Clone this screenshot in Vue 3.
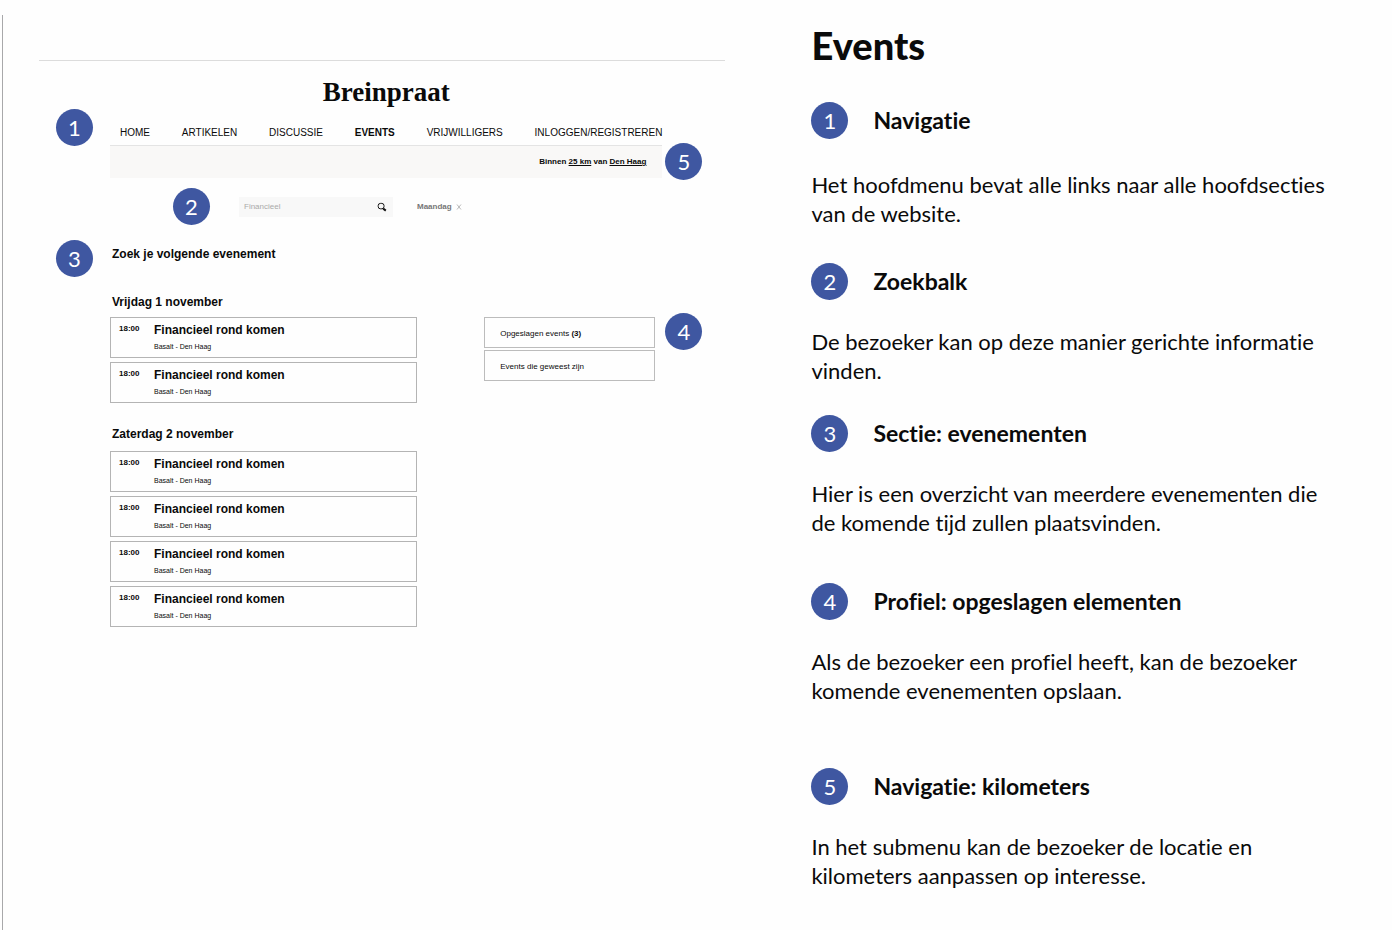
<script setup>
import { ref } from 'vue'

const query = ref('Financieel')

const menu = [
  { label: 'HOME' },
  { label: 'ARTIKELEN' },
  { label: 'DISCUSSIE' },
  { label: 'EVENTS', active: true },
  { label: 'VRIJWILLIGERS' },
  { label: 'INLOGGEN/REGISTREREN' }
]

const makeEvents = (count) =>
  Array.from({ length: count }, () => ({
    time: '18:00',
    title: 'Financieel rond komen',
    place: 'Basalt - Den Haag'
  }))

const days = [
  { name: 'Vrijdag 1 november', events: makeEvents(2) },
  { name: 'Zaterdag 2 november', events: makeEvents(4) }
]

const notes = [
  {
    title: 'Navigatie',
    text: 'Het hoofdmenu bevat alle links naar alle hoofdsecties\nvan de website.'
  },
  {
    title: 'Zoekbalk',
    text: 'De bezoeker kan op deze manier gerichte informatie\nvinden.'
  },
  {
    title: 'Sectie: evenementen',
    text: 'Hier is een overzicht van meerdere evenementen die\nde komende tijd zullen plaatsvinden.'
  },
  {
    title: 'Profiel: opgeslagen elementen',
    text: 'Als de bezoeker een profiel heeft, kan de bezoeker\nkomende evenementen opslaan.'
  },
  {
    title: 'Navigatie: kilometers',
    text: 'In het submenu kan de bezoeker de locatie en\nkilometers aanpassen op interesse.'
  }
]
</script>

<template>
  <main class="sheet">
    <section class="mock">
      <div class="site">
        <header>
          <p class="brand">Breinpraat</p>
          <div class="anchor">
            <span class="badge badge-left">1</span>
            <nav class="menu">
              <a
                v-for="item in menu"
                :key="item.label"
                href="#"
                :class="{ active: item.active }"
              >{{ item.label }}</a>
            </nav>
          </div>
          <div class="submenu anchor">
            <p>Binnen <a href="#">25 km</a> van <a href="#">Den Haag</a></p>
            <span class="badge badge-right">5</span>
          </div>
        </header>

        <form class="filters" @submit.prevent>
          <span class="badge">2</span>
          <div class="search">
            <input v-model="query" type="text" aria-label="Zoeken" />
            <button type="submit" aria-label="Zoek">
              <svg viewBox="0 0 10 10" width="10" height="10">
                <rect x="1.2" y="1.4" width="5.8" height="5.4" rx="2.2" fill="none" stroke="#111" stroke-width="1" />
                <path d="M6.2 6.6 L8.8 8.6" stroke="#111" stroke-width="2" />
              </svg>
            </button>
          </div>
          <div class="chip">
            <span>Maandag</span>
            <button type="button" aria-label="Verwijder Maandag">
              <svg viewBox="0 0 6 6" width="6" height="6">
                <path d="M1 0.5 L5 5.5 M5 0.5 L1 5.5" stroke="#aaa" stroke-width="0.8" />
              </svg>
            </button>
          </div>
        </form>

        <div class="anchor intro">
          <span class="badge badge-left">3</span>
          <h2>Zoek je volgende evenement</h2>
        </div>

        <div class="columns">
          <div class="agenda">
            <section v-for="day in days" :key="day.name" class="day">
              <h3>{{ day.name }}</h3>
              <ul>
                <li v-for="(event, i) in day.events" :key="i" class="event">
                  <time>{{ event.time }}</time>
                  <div>
                    <h4>{{ event.title }}</h4>
                    <p>{{ event.place }}</p>
                  </div>
                </li>
              </ul>
            </section>
          </div>
          <aside class="saved">
            <a href="#">Opgeslagen events <b>(3)</b></a>
            <a href="#">Events die geweest zijn</a>
            <span class="badge badge-saved">4</span>
          </aside>
        </div>
      </div>
    </section>

    <section class="legend">
      <h1>Events</h1>
      <ol>
        <li v-for="(note, i) in notes" :key="note.title">
          <div class="note-head">
            <span class="badge">{{ i + 1 }}</span>
            <h2>{{ note.title }}</h2>
          </div>
          <p>{{ note.text }}</p>
        </li>
      </ol>
    </section>
  </main>
</template>

<style>
body {
  background: #fefefe;
}
</style>

<style scoped>
.sheet {
  display: grid;
  grid-template-columns: minmax(0, 809fr) minmax(0, 581fr);
  box-sizing: border-box;
  min-height: calc(100vh - 15px);
  margin: 15px 0 0 2px;
  border-left: 1px solid #a8a8aa;
  color: #0a0a0a;
  font-family: "Liberation Sans", Arial, sans-serif;
}

h1, h2, h3, h4, p, ul, ol {
  margin: 0;
  padding: 0;
}

li {
  list-style: none;
}

a {
  color: inherit;
  text-decoration: none;
}

.mock {
  margin: 45px 86px 0 36px;
  border-top: 1px solid #dcdcdc;
}

.site {
  margin: 0 63px 0 71px;
}

.anchor {
  position: relative;
}

.badge {
  display: flex;
  flex: none;
  align-items: center;
  justify-content: center;
  width: 37px;
  height: 37px;
  border-radius: 50%;
  background: #3f57a1;
  color: #fff;
  font: 22px/37px Lato, sans-serif;
}

.badge-left,
.badge-right,
.badge-saved {
  position: absolute;
}

.badge-left {
  top: 1px;
  left: -54px;
}

.badge-right {
  top: -3px;
  right: -40px;
}

.badge-saved {
  top: -4px;
  right: -47px;
}

.brand {
  padding-top: 15px;
  font: bold 27px/32px "Liberation Serif", "Times New Roman", serif;
  text-align: center;
}

.menu {
  display: flex;
  justify-content: space-between;
  padding: 18px 0 5px 10px;
  border-bottom: 1px solid #e4e4e4;
  font-size: 10px;
  line-height: 14px;
}

.menu .active {
  font-weight: bold;
}

.submenu {
  padding: 8px 16px;
  background: #f9f8f7;
  font-size: 8px;
  font-weight: bold;
  line-height: 16px;
  text-align: right;
}

.submenu a {
  text-decoration: underline;
}

.filters {
  display: flex;
  align-items: center;
  padding: 10px 0 0 63px;
}

.search {
  display: flex;
  width: 154px;
  height: 20px;
  margin: 0 24px 0 29px;
  background: #f8f8f8;
}

.search input {
  flex: 1;
  min-width: 0;
  padding: 0 0 0 5px;
  border: 0;
  background: none;
  color: #aaa;
  font: 8px "Liberation Sans", Arial, sans-serif;
}

button {
  display: flex;
  align-items: center;
  padding: 0;
  border: 0;
  background: none;
}

.search button {
  margin-right: 6px;
}

.chip {
  display: flex;
  align-items: center;
  gap: 4px;
  color: #777;
  font-size: 8px;
  font-weight: bold;
}

.intro {
  margin-top: 14px;
  padding-top: 7px;
}

.intro h2,
.day h3 {
  padding-left: 2px;
  font-size: 12px;
  line-height: 16px;
}

.columns {
  display: grid;
  grid-template-columns: minmax(0, 307fr) minmax(0, 171fr);
  column-gap: 67px;
  margin: 32px 7px 0 0;
}

.day ul {
  display: grid;
  gap: 4px;
  margin-top: 7px;
}

.day + .day {
  margin-top: 23px;
}

.day + .day ul {
  margin-top: 9px;
}

.event {
  display: grid;
  grid-template-columns: 35px 1fr;
  padding: 4px 8px 5px;
  border: 1px solid #b4b4b4;
}

.event time {
  font-size: 8px;
  font-weight: bold;
  line-height: 14px;
}

.event h4 {
  font-size: 12px;
  line-height: 16px;
}

.event p {
  padding-top: 4px;
  font-size: 7px;
  line-height: 10px;
}

.saved {
  position: relative;
  display: grid;
  align-content: start;
  gap: 2px;
  margin-top: 23px;
}

.saved a {
  padding: 8px 15px 6px;
  border: 1px solid #bcbcbc;
  font-size: 8px;
  line-height: 15px;
}

.legend {
  padding-right: 40px;
  font-family: Lato, sans-serif;
  font-variant-ligatures: none;
}

.legend h1 {
  padding: 8px 0 35px;
  font-size: 38px;
  font-weight: 900;
  line-height: 44px;
}

.note-head {
  display: flex;
  align-items: center;
  gap: 25px;
}

.note-head h2 {
  padding-bottom: 2px;
  font-size: 23px;
  line-height: 30px;
}

.legend p {
  margin-top: 27px;
  font-size: 22px;
  line-height: 29px;
  white-space: pre-line;
}

.legend li + li {
  margin-top: 30px;
}

.legend li:first-child {
  margin-bottom: 35px;
}

.legend li:first-child p {
  margin-top: 31px;
}

.legend li:nth-child(4) {
  margin-top: 46px;
}

.legend li:nth-child(5) {
  margin-top: 63px;
}
</style>
